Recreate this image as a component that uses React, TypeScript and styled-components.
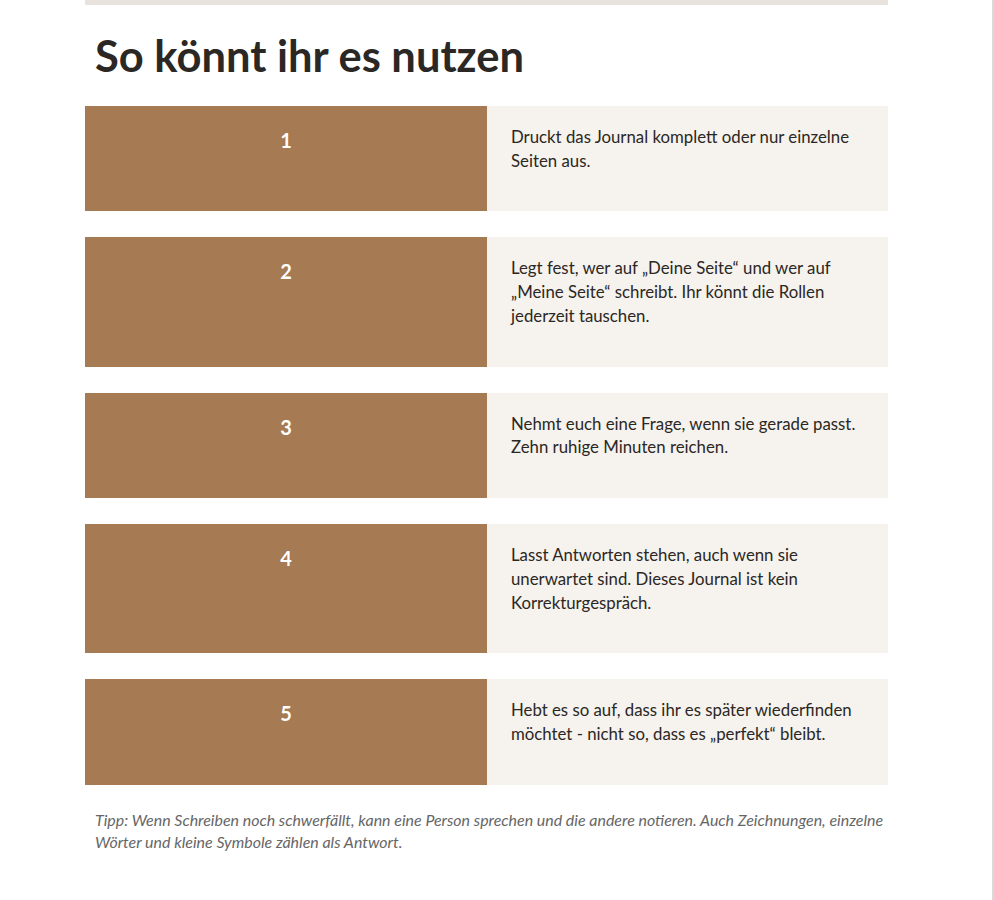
import React from "react";
import styled, { createGlobalStyle } from "styled-components";

const Global = createGlobalStyle`
  html, body { margin: 0; padding: 0; background: #ffffff; }
  body { font-family: Lato, "Noto Sans", sans-serif; color: #2b2724; }
`;

const Frame = styled.div`
  width: 992px;
  min-height: 100vh;
  border-right: 2px solid #d9d9d9;
  box-sizing: content-box;
`;

const Section = styled.section`
  width: 803px;
  margin-left: 85px;
  border-top: 5px solid #e9e3dd;
  padding-bottom: 40px;
`;

const Title = styled.h2`
  margin: 24px 0 25px;
  padding: 0 10px;
  font-size: 43.5px;
  line-height: 52px;
  font-weight: 700;
  color: #2b2724;
`;

const List = styled.div`
  display: flex;
  flex-direction: column;
  gap: 26px;
`;

const Row = styled.div`
  display: grid;
  grid-template-columns: 402px 1fr;
`;

const NumberCell = styled.div`
  background: #a67a52;
  color: #ffffff;
  font-size: 20px;
  font-weight: 700;
  line-height: 29px;
  text-align: center;
  padding: 20px 24px;
`;

const TextCell = styled.div`
  background: #f6f2ed;
  padding: 19px 24px 38.8px;
  font-size: 16.8px;
  line-height: 23.8px;
  color: #2b2724;
`;

const Tip = styled.p`
  margin: 24px 0 0;
  padding: 0 2px 0 10px;
  font-size: 15.95px;
  line-height: 22px;
  font-style: italic;
  color: #666666;
`;

const steps = [
  "Druckt das Journal komplett oder nur einzelne Seiten aus.",
  "Legt fest, wer auf „Deine Seite“ und wer auf „Meine Seite“ schreibt. Ihr könnt die Rollen jederzeit tauschen.",
  "Nehmt euch eine Frage, wenn sie gerade passt. Zehn ruhige Minuten reichen.",
  "Lasst Antworten stehen, auch wenn sie unerwartet sind. Dieses Journal ist kein Korrekturgespräch.",
  "Hebt es so auf, dass ihr es später wiederfinden möchtet - nicht so, dass es „perfekt“ bleibt.",
];

export default function App() {
  return (
    <>
      <Global />
      <Frame>
        <Section>
          <Title>So könnt ihr es nutzen</Title>
          <List>
            {steps.map((s, i) => (
              <Row key={i}>
                <NumberCell>{i + 1}</NumberCell>
                <TextCell>{s}</TextCell>
              </Row>
            ))}
          </List>
          <Tip>
            Tipp: Wenn Schreiben noch schwerfällt, kann eine Person sprechen und die andere notieren. Auch Zeichnungen, einzelne Wörter und kleine Symbole zählen als Antwort.
          </Tip>
        </Section>
      </Frame>
    </>
  );
}
